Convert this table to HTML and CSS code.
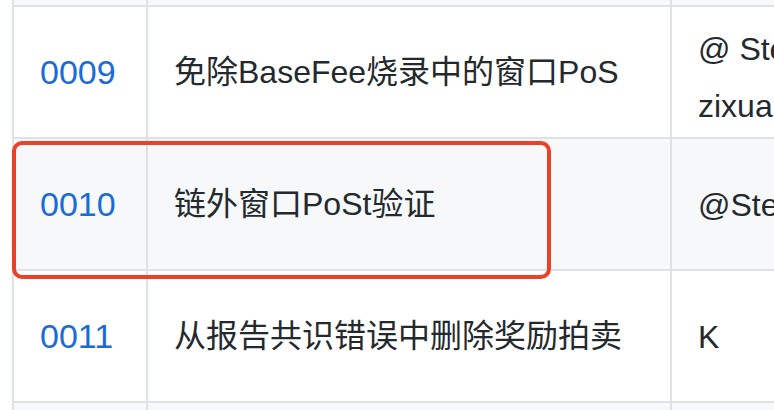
FILE: index.html
```html
<!DOCTYPE html>
<html lang="zh-CN">
<head>
  <meta charset="UTF-8" />
  <meta name="viewport" content="width=device-width, initial-scale=1.0" />
  <title>FIP 列表</title>
  <link rel="stylesheet" href="styles.css">
</head>
<body>
  <div class="page">
    <table class="fip-table">
      <colgroup>
        <col class="col-num">
        <col class="col-title">
        <col class="col-author">
      </colgroup>
      <tbody>
        <tr class="edge-row">
          <td></td>
          <td></td>
          <td></td>
        </tr>
        <tr>
          <td class="num"><a href="#">0009</a></td>
          <td class="title">免除BaseFee烧录中的窗口PoS</td>
          <td class="author two-line">@ Stebalien， @<br>zixuanzh</td>
        </tr>
        <tr>
          <td class="num"><a href="#">0010</a></td>
          <td class="title">链外窗口PoSt验证</td>
          <td class="author">@Stebalien</td>
        </tr>
        <tr>
          <td class="num"><a href="#">0011</a></td>
          <td class="title">从报告共识错误中删除奖励拍卖</td>
          <td class="author">K</td>
        </tr>
        <tr class="edge-row">
          <td></td>
          <td></td>
          <td></td>
        </tr>
      </tbody>
    </table>

    <!-- highlight box -->
    <div class="highlight"></div>
  </div>
</body>
</html>
```

FILE: styles.css
```css
* {
  box-sizing: border-box;
}
body {
  margin: 0;
  background: #ffffff;
  font-family: "Liberation Sans", "Noto Sans CJK SC", sans-serif;
  color: #24292e;
}
.page {
  position: relative;
  height: 410px;
  overflow: hidden;
}
.fip-table {
  border-collapse: collapse;
  table-layout: fixed;
  width: 1000px;
  margin: -127px 0 0 12px;
  font-size: 32px;
  line-height: 57px;
}
.col-num {
  width: 134px;
}
.col-title {
  width: 524px;
}
.col-author {
  width: 342px;
}
.fip-table tr {
  background: #ffffff;
}
.fip-table tr:nth-child(odd) {
  background: #f6f8fa;
}
.fip-table td {
  border: 2px solid #dfe2e5;
  padding: 0 26px;
  height: 132px;
  vertical-align: middle;
  white-space: nowrap;
  overflow: hidden;
}
.fip-table .num {
  font-size: 34px;
}
.fip-table .author {
  padding-top: 3px;
}
.fip-table .two-line {
  padding-top: 12px;
}
.fip-table a {
  color: #1a6ad8;
  text-decoration: none;
}
.highlight {
  position: absolute;
  left: 12px;
  top: 141px;
  width: 539px;
  height: 138px;
  border: 4px solid #ea4128;
  border-radius: 10px;
}
```
